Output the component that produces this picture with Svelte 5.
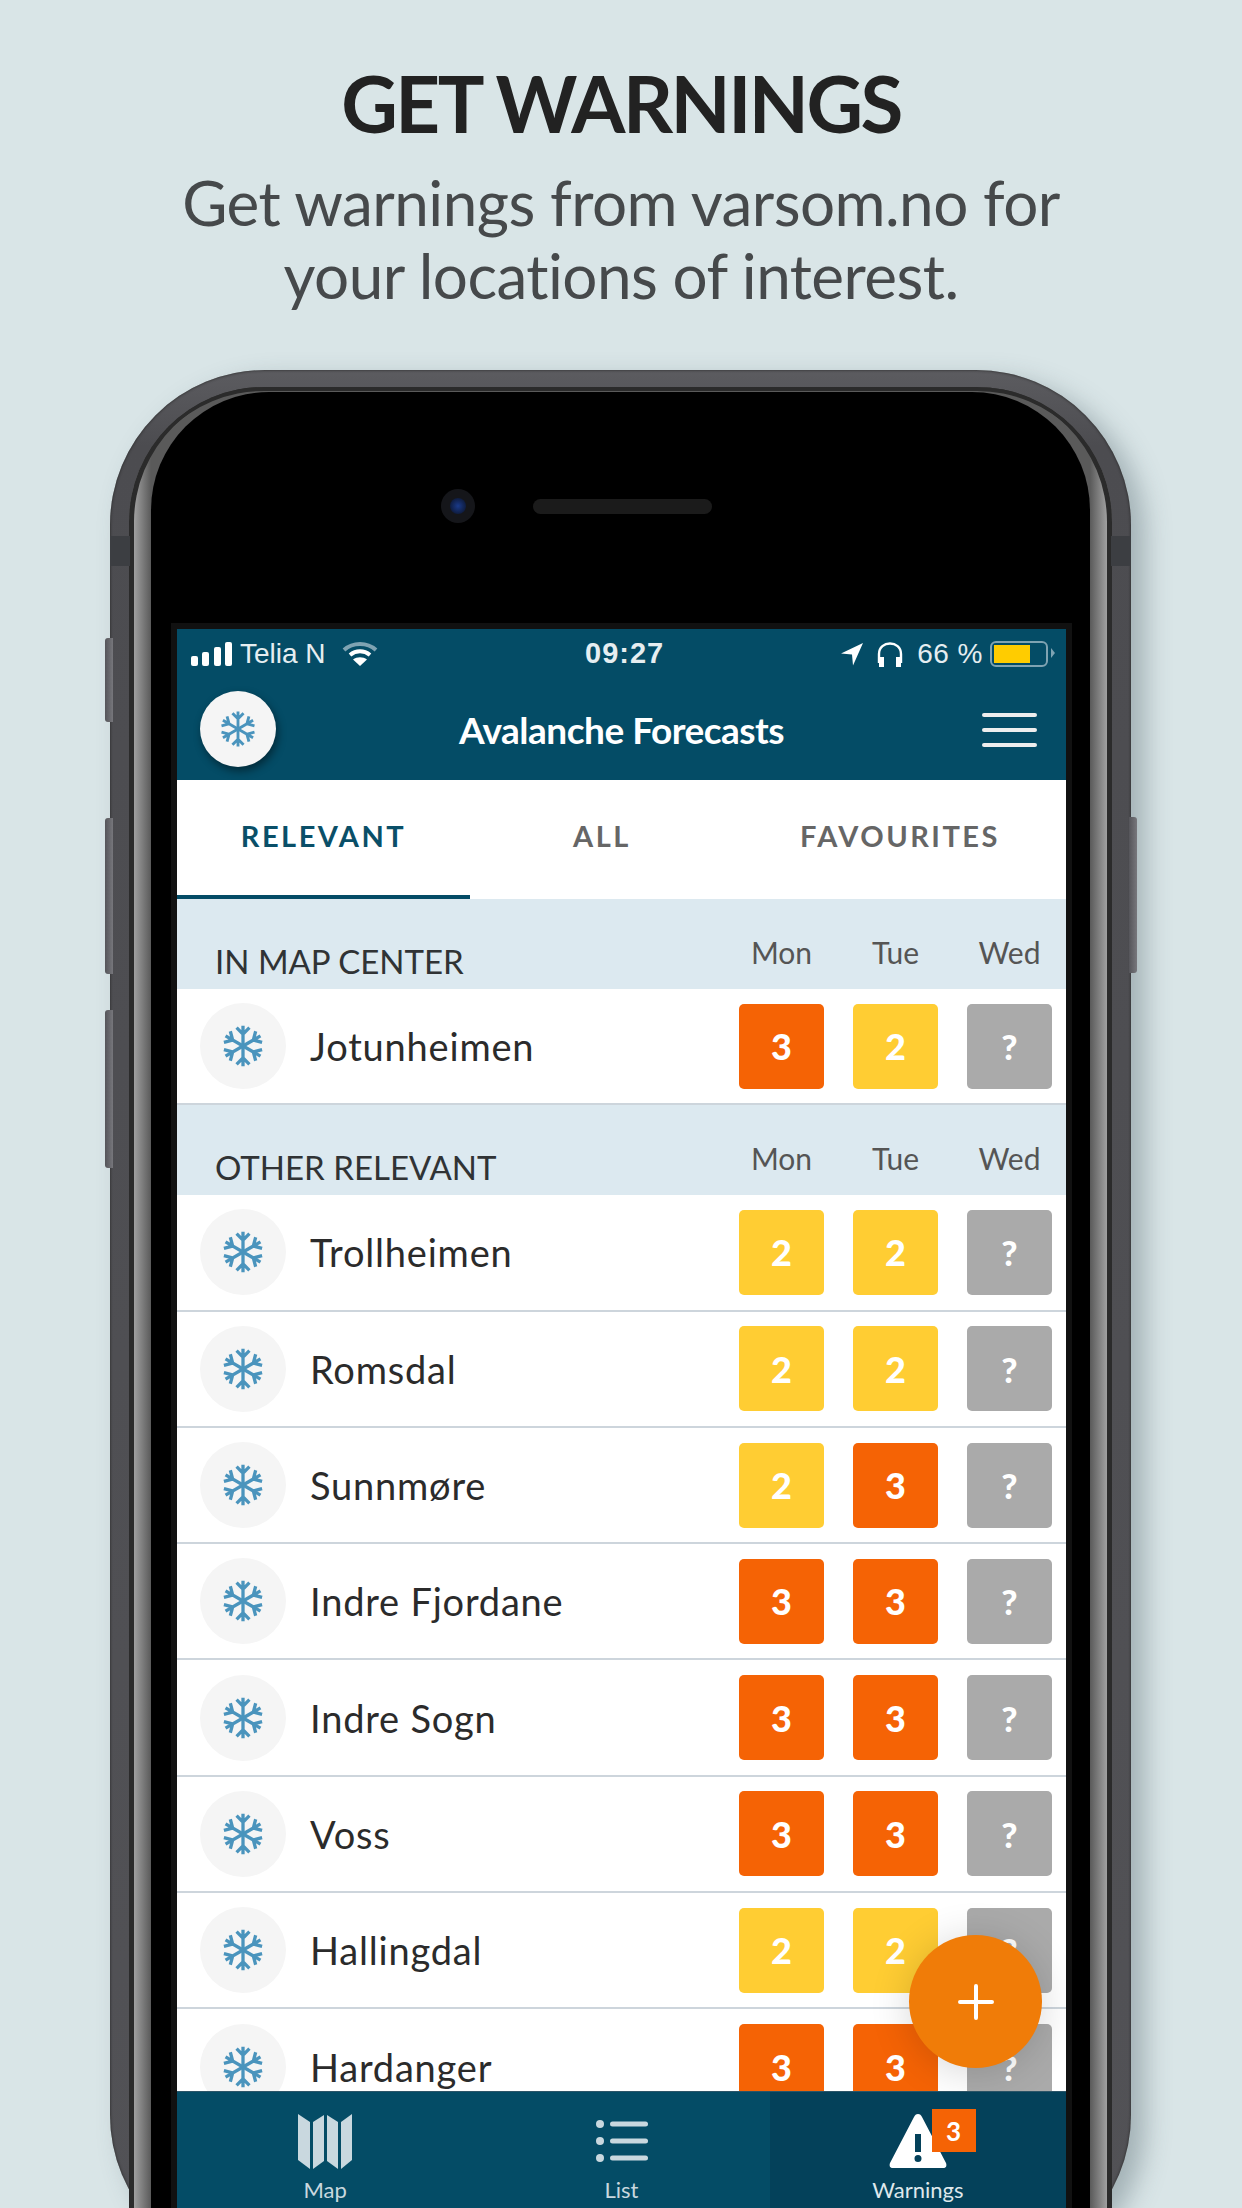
<script>
  const sections = [
    { title: "IN MAP CENTER", rows: [["Jotunheimen", 3, 2]] },
    {
      title: "OTHER RELEVANT",
      rows: [
        ["Trollheimen", 2, 2],
        ["Romsdal", 2, 2],
        ["Sunnmøre", 2, 3],
        ["Indre Fjordane", 3, 3],
        ["Indre Sogn", 3, 3],
        ["Voss", 3, 3],
        ["Hallingdal", 2, 2],
        ["Hardanger", 3, 3],
      ],
    },
  ];
  const days = ["Mon", "Tue", "Wed"];
  const arms = [0, 60, 120, 180, 240, 300];
</script>

{#snippet flake(size)}
  <svg width={size} height={size} viewBox="-24 -24 48 48" class="flake">
    {#each arms as a}
      <g transform="rotate({a})">
        <path d="M0 0V-22M-7 -20L0 -13L7 -20" />
      </g>
    {/each}
  </svg>
{/snippet}

<div class="page">
  <header class="intro">
    <h1>GET WARNINGS</h1>
    <p>Get warnings from varsom.no for<br />your locations of interest.</p>
  </header>

  <div class="phone">
    <span class="btn b1"></span>
    <span class="btn b2"></span>
    <span class="btn b3"></span>
    <span class="btn b4"></span>
    <span class="antenna left"></span>
    <span class="antenna right"></span>

    <div class="rim">
      <div class="face">
        <div class="earpiece">
          <span class="camera"><i></i></span>
          <span class="speaker"></span>
        </div>

        <div class="screen">
          <div class="status">
            <div class="st-left">
              <svg width="42" height="24" viewBox="0 0 42 24" fill="#fff">
                <rect x="0" y="14" width="7" height="10" rx="2" />
                <rect x="11" y="10" width="7" height="14" rx="2" />
                <rect x="23" y="5" width="7" height="19" rx="2" />
                <rect x="34" y="0" width="7" height="24" rx="2" />
              </svg>
              <span class="carrier">Telia N</span>
              <svg width="36" height="26" viewBox="0 0 36 26" fill="none" stroke-linecap="butt">
                <path d="M2 9C11 1 25 1 34 9" stroke="#7fa3b2" stroke-width="4" />
                <path d="M8 14C14 9 22 9 28 14" stroke="#fff" stroke-width="4" />
                <path d="M18 25L11 18.5C15 15.5 21 15.5 25 18.5Z" fill="#fff" />
              </svg>
            </div>
            <span class="clock">09:27</span>
            <div class="st-right">
              <svg class="arrow" width="24" height="24" viewBox="0 0 24 24" fill="#fff"><path d="M23 1L1 11.500L12 12.500L13 23.500Z" /></svg>
              <svg width="28" height="26" viewBox="0 0 28 26" fill="none">
                <path d="M3 22V13C3 -1 25 -1 25 13V22" stroke="#fff" stroke-width="2.400" />
                <rect x="3" y="16" width="5" height="10" fill="#fff" />
                <rect x="20" y="16" width="5" height="10" fill="#fff" />
              </svg>
              <span class="pct">66 %</span>
              <span class="battery"><i></i></span>
            </div>
          </div>

          <div class="appbar">
            <span class="logo">{@render flake(38)}</span>
            <span class="apptitle">Avalanche Forecasts</span>
            <span class="burger"><i></i><i></i><i></i></span>
          </div>

          <nav class="tabs">
            <span class="tab active">RELEVANT</span>
            <span class="tab mid">ALL</span>
            <span class="tab last">FAVOURITES</span>
          </nav>

          <div class="list">
            {#each sections as s}
              <div class="sec">
                <span class="sec-title">{s.title}</span>
                <div class="sec-days">
                  {#each days as d}<span>{d}</span>{/each}
                </div>
              </div>
              {#each s.rows as r}
                <div class="row">
                  <span class="avatar">{@render flake(44)}</span>
                  <span class="name">{r[0]}</span>
                  <div class="levels">
                    <span class="lv l{r[1]}">{r[1]}</span>
                    <span class="lv l{r[2]}">{r[2]}</span>
                    <span class="lv q">?</span>
                  </div>
                </div>
              {/each}
            {/each}
          </div>

          <span class="fab">
            <svg width="36" height="36" viewBox="0 0 36 36"><path d="M18 2V34M2 18H34" stroke="#fff" stroke-width="4" stroke-linecap="round" /></svg>
          </span>

          <div class="bottom">
            <div class="bt">
              <svg width="56" height="56" viewBox="0 0 56 56" fill="#c9d8df">
                <path d="M1 1L13 9V56L1 47Z" />
                <path d="M16 9L27 2V48L16 56Z" />
                <path d="M30 2L41 9V56L30 48Z" />
                <path d="M44 9L55 1V47L44 56Z" />
              </svg>
              <span>Map</span>
            </div>
            <div class="bt">
              <svg width="56" height="56" viewBox="0 0 56 56" fill="#c9d8df">
                <circle cx="7" cy="11" r="4" /><circle cx="7" cy="28" r="4" /><circle cx="7" cy="45" r="4" />
                <rect x="17" y="8.500" width="38" height="5" rx="2.500" />
                <rect x="17" y="25.500" width="38" height="5" rx="2.500" />
                <rect x="17" y="42.500" width="38" height="5" rx="2.500" />
              </svg>
              <span>List</span>
            </div>
            <div class="bt on">
              <svg width="60" height="56" viewBox="0 0 60 56" fill="#fff">
                <path fill-rule="evenodd" d="M30 1C32 1 33 2 34 4L58 50C59 53 58 55 55 55H5C2 55 1 53 2 50L26 4C27 2 28 1 30 1ZM27 21V39H33V21ZM30 42A3.500 3.500 0 1 0 30 49A3.500 3.500 0 1 0 30 42Z" />
              </svg>
              <b class="badge">3</b>
              <span>Warnings</span>
            </div>
          </div>
        </div>
      </div>
    </div>
  </div>
</div>

<style>
  :global(body) {
    margin: 0;
  }
  .page {
    width: 1242px;
    height: 2208px;
    overflow: hidden;
    background: #d9e5e7;
    font-family: Lato, "Open Sans", sans-serif;
    font-variant-ligatures: none;
  }
  .intro {
    height: 370px;
    padding-top: 57px;
    box-sizing: border-box;
    text-align: center;
  }
  h1 {
    margin: 0;
    font-size: 78px;
    line-height: 92px;
    font-weight: 700;
    letter-spacing: -2.500px;
    color: #222;
  }
  .intro p {
    margin: 17px 0 0;
    font-size: 62px;
    line-height: 73px;
    letter-spacing: -0.550px;
    color: #46494b;
  }

  .phone {
    position: relative;
    width: 1021px;
    height: 1900px;
    margin-left: 110px;
    padding: 17px 19px 0;
    box-sizing: border-box;
    border-radius: 155px;
    background: linear-gradient(#5c5c60, #4c4c50 4%, #525256);
    box-shadow: 14px 10px 26px rgba(60, 80, 90, 0.35), inset 0 0 3px #222;
  }
  .btn {
    position: absolute;
    width: 8px;
    left: -5px;
    background: linear-gradient(90deg, #55555a, #77777c);
    border-radius: 3px 0 0 3px;
  }
  .b1 { top: 268px; height: 84px; }
  .b2 { top: 448px; height: 156px; }
  .b3 { top: 640px; height: 158px; }
  .b4 { top: 447px; height: 156px; left: auto; right: -6px; border-radius: 0 3px 3px 0; }
  .antenna {
    position: absolute;
    top: 166px;
    height: 30px;
    width: 20px;
    background: #3c3e42;
  }
  .antenna.left { left: 0; }
  .antenna.right { right: 0; }

  .rim {
    height: 100%;
    padding: 5px 22px 0;
    box-sizing: border-box;
    border-radius: 135px 135px 0 0;
    background: linear-gradient(90deg, #a0a0a0 5px, #5a5a5a 22px, #5a5a5a calc(100% - 22px), #a0a0a0 calc(100% - 5px));
    box-shadow: inset 0 4px 0 #2b2b2b, inset 5px 0 0 #2b2b2b, inset -5px 0 0 #2b2b2b;
  }
  .face {
    height: 100%;
    box-sizing: border-box;
    padding: 237px 0 0 26px;
    position: relative;
    border-radius: 118px 118px 0 0;
    background: #000;
  }
  .earpiece {
    position: absolute;
    top: 97px;
    left: 290px;
    display: flex;
    align-items: center;
    gap: 58px;
  }
  .camera {
    width: 34px;
    height: 34px;
    border-radius: 50%;
    background: #15161a;
    display: flex;
    align-items: center;
    justify-content: center;
  }
  .camera i {
    width: 16px;
    height: 16px;
    border-radius: 50%;
    background: radial-gradient(circle, #1a3a8a, #0a1020);
  }
  .speaker {
    width: 179px;
    height: 15px;
    border-radius: 8px;
    background: #1b1b1b;
  }

  .screen {
    position: relative;
    width: 889px;
    height: 1579px;
    display: flex;
    flex-direction: column;
    background: #fff;
    outline: 6px solid #111;
  }
  .status {
    height: 50px;
    padding: 0 12px 0 14px;
    box-sizing: border-box;
    display: flex;
    align-items: center;
    justify-content: space-between;
    position: relative;
    background: #044c66;
    color: #e6eef1;
    font-family: "Liberation Sans", Arial, sans-serif;
    font-size: 28px;
  }
  .st-left, .st-right {
    display: flex;
    align-items: center;
    gap: 7px;
  }
  .carrier {
    margin-right: 9px;
  }
  .clock {
    position: absolute;
    left: 408px;
    top: 8px;
    font-weight: 700;
    font-size: 29px;
    letter-spacing: 1px;
  }
  .arrow {
    margin-right: 5px;
  }
  .pct {
    margin-left: 6px;
    letter-spacing: 0.500px;
  }
  .battery {
    position: relative;
    width: 58px;
    height: 26px;
    margin-right: 6px;
    box-sizing: border-box;
    border: 2px solid #7fa3b2;
    border-radius: 6px;
    padding: 2px;
  }
  .battery i {
    display: block;
    width: 36px;
    height: 18px;
    background: #fc0;
  }
  .battery::after {
    content: "";
    position: absolute;
    right: -9px;
    top: 5px;
    border-left: 4px solid #7fa3b2;
    border-top: 5px solid transparent;
    border-bottom: 5px solid transparent;
  }

  .appbar {
    height: 101px;
    flex: none;
    position: relative;
    display: flex;
    align-items: center;
    justify-content: center;
    background: #044c66;
  }
  .logo {
    position: absolute;
    left: 23px;
    top: 12px;
    width: 76px;
    height: 76px;
    border-radius: 50%;
    display: flex;
    align-items: center;
    justify-content: center;
    background: #f5f5f5;
    box-shadow: 2px 4px 8px rgba(0, 0, 0, 0.45);
  }
  .apptitle {
    color: #fff;
    font-size: 37px;
    font-weight: 700;
    letter-spacing: -0.500px;
  }
  .burger {
    position: absolute;
    right: 29px;
    top: 34px;
    display: flex;
    flex-direction: column;
    gap: 11px;
  }
  .burger i {
    display: block;
    width: 55px;
    height: 4px;
    border-radius: 2px;
    background: #eee;
  }

  .flake {
    display: block;
  }
  .flake path {
    fill: none;
    stroke: #4a94bd;
    stroke-width: 3.600;
  }

  .tabs {
    height: 119px;
    flex: none;
    display: flex;
    box-sizing: border-box;
    background: #fff;
  }
  .tab {
    padding-bottom: 8px;
    box-sizing: border-box;
    display: flex;
    align-items: center;
    justify-content: center;
    font-size: 29px;
    font-weight: 700;
    letter-spacing: 2.500px;
    color: #666;
  }
  .active {
    width: 293px;
    color: #0a4f68;
    border-bottom: 4px solid #044c66;
    padding-bottom: 4px;
  }
  .mid { width: 264px; }
  .last { flex: 1; }

  .list {
    flex: 1;
    min-height: 0;
    overflow: hidden;
  }
  .sec {
    height: 90px;
    display: flex;
    justify-content: space-between;
    background: #dce9f0;
    padding: 0 0 0 38px;
    box-sizing: border-box;
  }
  .sec-title {
    align-self: flex-end;
    margin-bottom: 8px;
    font-size: 33px;
    line-height: 40px;
    color: #303335;
  }
  .sec-days {
    display: flex;
    padding: 33px 14px 0 0;
    gap: 29px;
  }
  .sec-days span {
    width: 85px;
    text-align: center;
    font-size: 30px;
    line-height: 40px;
    color: #555;
  }
  .row {
    height: 116.300px;
    box-sizing: border-box;
    display: flex;
    align-items: center;
    padding: 0 14px 0 23px;
    background: #fff;
    border-bottom: 2px solid #cdd5dc;
  }
  .avatar {
    width: 86px;
    height: 86px;
    flex: none;
    border-radius: 50%;
    display: flex;
    align-items: center;
    justify-content: center;
    background: #f5f5f5;
  }
  .name {
    flex: 1;
    margin-left: 24px;
    font-size: 38px;
    letter-spacing: 0.800px;
    color: #2b2b2b;
  }
  .levels {
    display: flex;
    gap: 29px;
  }
  .lv {
    width: 85px;
    height: 85px;
    border-radius: 5px;
    display: flex;
    align-items: center;
    justify-content: center;
    color: #fff;
    font-size: 36px;
    font-weight: 900;
  }
  .l2 { background: #ffcd33; }
  .l3 { background: #f56305; }
  .q { background: #aaa; font-size: 35px; }

  .fab {
    position: absolute;
    left: 732px;
    top: 1306px;
    width: 133px;
    height: 133px;
    border-radius: 50%;
    display: flex;
    align-items: center;
    justify-content: center;
    background: #f07c08;
    box-shadow: 0 4px 40px rgba(0, 0, 0, 0.16);
  }

  .bottom {
    height: 117px;
    flex: none;
    display: flex;
    background: #044c66;
    border-top: 1px solid #2c5568;
    box-sizing: border-box;
  }
  .bt {
    flex: 1;
    position: relative;
    padding-top: 21px;
    box-sizing: border-box;
    display: flex;
    flex-direction: column;
    align-items: center;
    color: #c9d8df;
    font-size: 22px;
  }
  .bt span {
    margin-top: 7px;
    line-height: 28px;
  }
  .on {
    background: #04415a;
    color: #dfe8ec;
  }
  .badge {
    position: absolute;
    left: 162px;
    top: 17px;
    width: 44px;
    height: 43px;
    display: flex;
    align-items: center;
    justify-content: center;
    background: #f56305;
    color: #fff;
    font-size: 26px;
  }
</style>
